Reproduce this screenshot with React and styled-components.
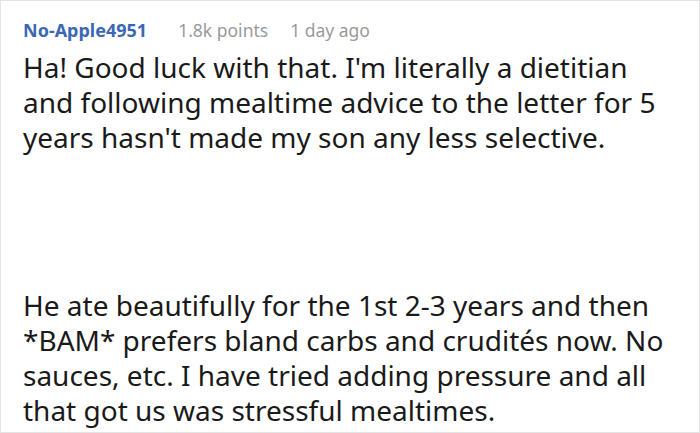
import styled, { createGlobalStyle } from "styled-components";

const Global = createGlobalStyle`
  html, body {
    margin: 0;
    padding: 0;
    background: #fff;
  }
`;

const Card = styled.div`
  box-sizing: border-box;
  width: 700px;
  height: 433px;
  overflow: hidden;
  border: 1px solid #e4e4e4;
  padding: 17px 22px 0 22px;
  font-family: "Noto Sans", "Open Sans", sans-serif;
  background: #fff;
`;

const Meta = styled.div`
  display: flex;
  align-items: baseline;
  font-size: 18px;
  line-height: 24px;
`;

const Author = styled.span`
  color: #3b68b4;
  font-weight: 700;
`;

const Info = styled.span`
  color: #9a9a9a;
  font-size: 17.5px;
  margin-left: ${(p) => p.$gap}px;
`;

const Body = styled.div`
  margin-top: 8px;
  color: #1a1a1a;
  font-size: 28px;
  line-height: 35px;
`;

const Para = styled.p`
  margin: 0;
  & + & {
    margin-top: 133px;
  }
`;

function App() {
  return (
    <>
      <Global />
      <Card>
        <Meta>
          <Author>No-Apple4951</Author>
          <Info $gap={31}>1.8k points</Info>
          <Info $gap={22}>1 day ago</Info>
        </Meta>
        <Body>
          <Para>
            Ha! Good luck with that. I'm literally a dietitian and following
            mealtime advice to the letter for 5 years hasn't made my son any
            less selective.
          </Para>
          <Para>
            He ate beautifully for the 1st 2-3 years and then *BAM* prefers
            bland carbs and crudités now. No sauces, etc. I have tried adding
            pressure and all that got us was stressful mealtimes.
          </Para>
        </Body>
      </Card>
    </>
  );
}

export default App;
